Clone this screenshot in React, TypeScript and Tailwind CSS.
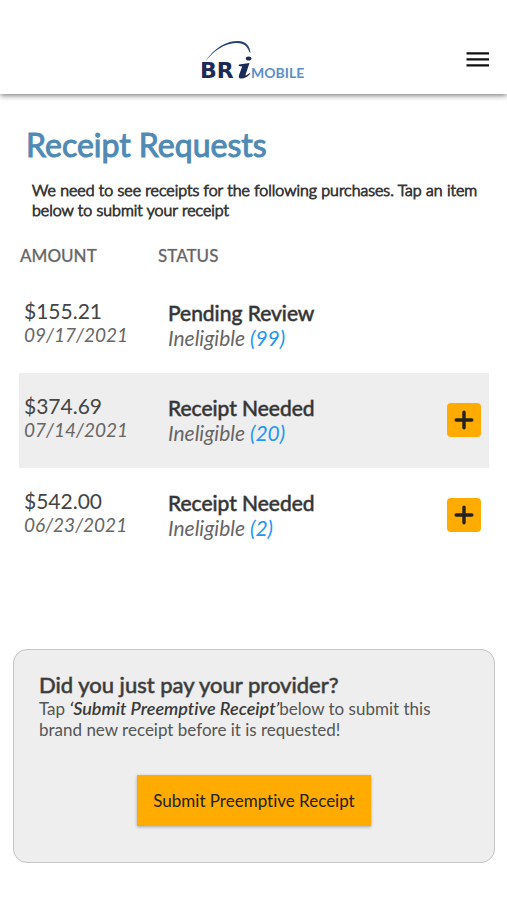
interface Receipt {
  amount: string;
  date: string;
  status: string;
  count: number;
  needed: boolean;
}

const receipts: Receipt[] = [
  { amount: '$155.21', date: '09/17/2021', status: 'Pending Review', count: 99, needed: false },
  { amount: '$374.69', date: '07/14/2021', status: 'Receipt Needed', count: 20, needed: true },
  { amount: '$542.00', date: '06/23/2021', status: 'Receipt Needed', count: 2, needed: true },
];

function Logo() {
  return (
    <svg width="112" height="44" viewBox="-3 0 112 44" role="img" aria-label="BRi Mobile">
      <path d="M3 22 C12 8 24 1 36 1 C44 1 48 6 48.5 13 L47.4 12 C45 5.4 41 2.8 34 3 C23 3.4 12 10 3 22 Z" fill="#24406e" />
      <text x="-2" y="38" fontSize="22" fontWeight="700" fill="#1b2a57" className="font-['DejaVu_Sans',sans-serif]">BR</text>
      <path d="M37 24.5 L47.5 23 L43.6 34.6 C43.2 36 44.6 35.6 47.6 33 L48 34 C44.6 37.6 41.6 38.8 39 38.6 C36.6 38.4 36.4 36.6 37.2 34.4 L40.2 26.4 L36.6 26 Z" fill="#1b2a57" />
      <ellipse cx="46.6" cy="18.6" rx="2.8" ry="2" fill="#1b2a57" />
      <text x="49" y="38" fontSize="14" fontWeight="700" fill="#5b8fc7" className="font-[Lato,sans-serif]">MOBILE</text>
    </svg>
  );
}

function Header() {
  return (
    <header className="flex h-[94px] items-end justify-between bg-white pb-2.5 pl-[199px] pr-4 shadow-[0_1px_6px_rgba(0,0,0,0.6)]">
      <Logo />
      <button type="button" aria-label="Open menu" className="mb-2.5 text-[#111111]">
        <svg width="27" height="27" viewBox="0 0 27 27" fill="currentColor">
          <path d="M2.5 5.2h22.5v2.4h-22.5zM2.5 11.2h22.5v2.4h-22.5zM2.5 17.2h22.5v2.4h-22.5z" />
        </svg>
      </button>
    </header>
  );
}

function ReceiptRow({ amount, date, status, count, needed }: Receipt) {
  return (
    <tr className="h-[95px] align-top even:bg-[#eeeeee]">
      <td className="pl-[5px] pt-[21px]">
        <div className="text-[21px] leading-6 text-[#444444]">{amount}</div>
        <div className="text-[19px] italic leading-6 text-[#666666]">{date}</div>
      </td>
      <td className="pl-[10px] pt-[23px]">
        <div className="text-[21px] leading-6 text-[#333333] [-webkit-text-stroke:1px_#33333399]">{status}</div>
        <div className="text-[21px] italic leading-[26px] text-[#666666]">
          Ineligible <span className="text-[#2196f3]">({count})</span>
        </div>
      </td>
      <td className="pr-2 pt-[30px]">
        {needed && (
          <button
            type="button"
            aria-label={`Add receipt for ${amount}`}
            className="ml-auto flex size-[34px] items-center justify-center rounded bg-[#ffab00] text-[#222222]"
          >
            <svg width="20" height="20" viewBox="0 0 20 20" stroke="currentColor" strokeWidth="3.4" strokeLinecap="round">
              <path d="M10 2.2v15.6M2.2 10h15.6" />
            </svg>
          </button>
        )}
      </td>
    </tr>
  );
}

export default function App() {
  return (
    <div className="min-h-screen bg-white font-[Lato,sans-serif] [font-variant-ligatures:none]">
      <Header />
      <main className="pb-9">
        <h1 className="px-[26px] pt-[31px] text-[32px] leading-10 text-[#4f8ab5] [-webkit-text-stroke:1px_#4f8ab5]">
          Receipt Requests
        </h1>
        <p className="pl-8 pr-4 pt-[15px] text-[16px] font-light leading-5 text-[#3a3a3a] [-webkit-text-stroke:1px_#3a3a3a]">
          We need to see receipts for the following purchases. Tap an item below to submit your receipt
        </p>
        <div className="pl-[19px] pr-[18px] pt-[26px]">
          <table className="w-full table-fixed">
            <thead>
              <tr className="h-8 text-left align-top text-[17px] leading-5 text-[#666666] [-webkit-text-stroke:1px_#66666633]">
                <th scope="col" className="w-[139px] pl-px font-medium">AMOUNT</th>
                <th scope="col" className="font-medium">STATUS</th>
                <td className="w-16" />
              </tr>
            </thead>
            <tbody>
              {receipts.map((receipt) => (
                <ReceiptRow key={receipt.date} {...receipt} />
              ))}
            </tbody>
          </table>
        </div>
        <section className="ml-[13px] mr-3 mt-[86px] rounded-[14px] border border-[#c4c4c4] bg-[#eeeeee] px-[25px] pb-9 pt-[21px]">
          <h2 className="text-[22px] leading-[27px] text-[#3a3a3a] [-webkit-text-stroke:1px_#3a3a3a99]">
            Did you just pay your provider?
          </h2>
          <p className="text-[17px] leading-[21px] text-[#555555]">
            Tap <em className="text-[18px] font-semibold leading-5 text-[#3a3a3a]">‘Submit Preemptive Receipt’</em>below to
            submit this brand new receipt before it is requested!
          </p>
          <button
            type="button"
            className="mx-auto mt-[35px] block h-[51px] w-[234px] bg-[#ffab00] text-[17px] text-[#222222] shadow-[0_1px_3px_rgba(0,0,0,0.3)]"
          >
            Submit Preemptive Receipt
          </button>
        </section>
      </main>
    </div>
  );
}
